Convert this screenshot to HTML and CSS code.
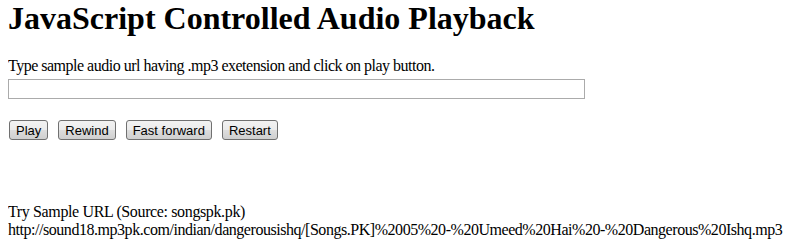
FILE: index.html
```html
<!DOCTYPE html>
<html>
<head>
<meta charset="utf-8">
<title>JavaScript Controlled Audio Playback</title>
<link rel="stylesheet" href="styles.css">
</head>
<body>
<h1 class="title">JavaScript Controlled Audio Playback</h1>
<p class="hint">Type sample audio url having .mp3 exetension and click on play button.</p>
<input class="url-input" type="text">
<div class="controls">
  <button class="btn">Play</button>
  <button class="btn">Rewind</button>
  <button class="btn">Fast forward</button>
  <button class="btn">Restart</button>
</div>
<div class="sample">
  <div>Try Sample URL (Source: songspk.pk)</div>
  <div class="sample-url">http://sound18.mp3pk.com/indian/dangerousishq/[Songs.PK]%2005%20-%20Umeed%20Hai%20-%20Dangerous%20Ishq.mp3</div>
</div>
</body>
</html>
```
FILE: styles.css
```css
html, body {
  background: #fff;
}
body {
  margin: 0 8px;
  font-family: "Liberation Serif", "Times New Roman", serif;
  font-size: 16px;
  letter-spacing: -0.37px;
  color: #000;
  line-height: 18px;
  overflow: hidden;
}
.title {
  margin: 0;
  font-size: 32px;
  line-height: 37px;
  font-weight: bold;
  letter-spacing: 0;
}
.hint {
  margin: 20px 0 4px 0;
  letter-spacing: -0.5px;
}
.url-input {
  display: block;
  box-sizing: border-box;
  width: 577px;
  height: 20px;
  margin: 0;
  padding: 0 2px;
  border: 1px solid #ababab;
  background: #fff;
  outline: none;
}
.controls {
  display: flex;
  gap: 10px;
  margin: 21px 0 0 1px;
}
.btn {
  box-sizing: border-box;
  height: 20px;
  padding: 0 6px;
  margin: 0;
  font-family: "Liberation Sans", Arial, sans-serif;
  font-size: 13px;
  letter-spacing: 0;
  color: #000;
  border: 1px solid #707070;
  border-radius: 3px;
  background: linear-gradient(#f2f2f2 0%, #ebebeb 50%, #dddddd 51%, #cfcfcf 100%);
}
.sample {
  margin-top: 63px;
}
.sample-url {
  white-space: nowrap;
  letter-spacing: -0.46px;
}
```
